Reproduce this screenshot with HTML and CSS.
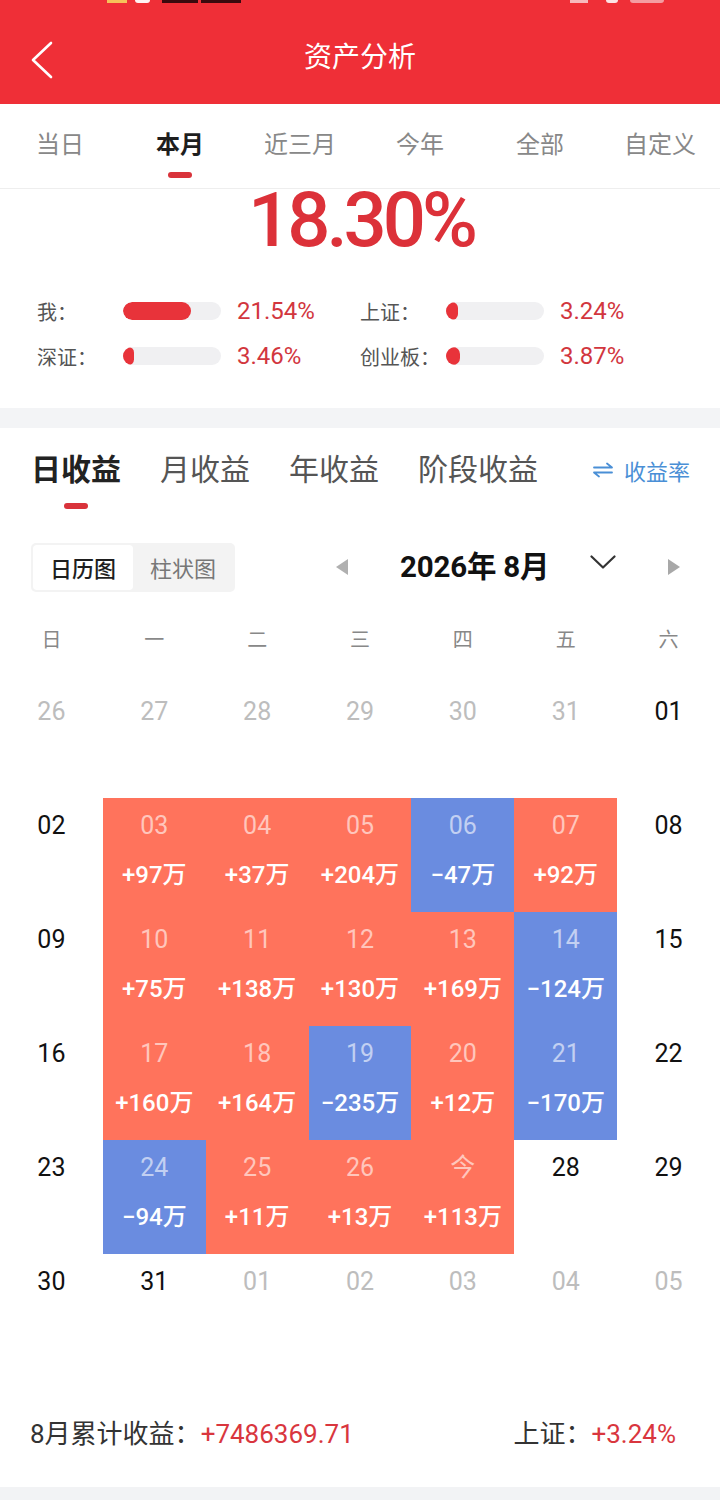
FILE: index.html
```html
<!DOCTYPE html>
<html lang="zh-CN">
<head>
<meta charset="utf-8">
<title>资产分析</title>
<link rel="stylesheet" href="styles.css">
</head>
<body>
<header class="header">
  <div class="status">
    <span class="st st-a"></span><span class="st st-b"></span><span class="st st-c"></span><span class="st st-d"></span>
    <span class="st-sp"></span>
    <span class="st st-e"></span><span class="st st-f"></span><span class="st st-g"></span>
  </div>
  <div class="titlebar">
    <div class="back">
      <svg width="26" height="40" viewBox="0 0 26 40"><polyline points="21,3 3,20 21,37" fill="none" stroke="#fff" stroke-width="2.6" stroke-linecap="round" stroke-linejoin="round"/></svg>
    </div>
    <div class="title">资产分析</div>
    <div></div>
  </div>
</header>

<nav class="tabs">
  <div class="tab">当日</div>
  <div class="tab on">本月</div>
  <div class="tab">近三月</div>
  <div class="tab">今年</div>
  <div class="tab">全部</div>
  <div class="tab">自定义</div>
</nav>

<section class="summary">
  <div class="big">18.30%</div>
  <div class="stats">
    <div class="stat"><span class="lb">我：</span><span class="bar"><i style="width:68px"></i></span><span class="val">21.54%</span></div>
    <div class="stat"><span class="lb">上证：</span><span class="bar"><i style="width:12px"></i></span><span class="val">3.24%</span></div>
    <div class="stat"><span class="lb">深证：</span><span class="bar"><i style="width:11px"></i></span><span class="val">3.46%</span></div>
    <div class="stat"><span class="lb">创业板：</span><span class="bar"><i style="width:14px"></i></span><span class="val">3.87%</span></div>
  </div>
</section>

<div class="sep"></div>

<section class="panel">
  <div class="etabs">
    <div class="etab on">日收益</div>
    <div class="etab">月收益</div>
    <div class="etab">年收益</div>
    <div class="etab">阶段收益</div>
    <div class="rate">
      <svg width="20" height="16" viewBox="0 0 20 16"><path d="M1 5.5H19L14 1.5M19 10.5H1L6 14.5" fill="none" stroke="#4A8FD6" stroke-width="1.8" stroke-linecap="round" stroke-linejoin="round"/></svg>
      <span>收益率</span>
    </div>
  </div>

  <div class="ctrl">
    <div class="toggle"><span class="on">日历图</span><span>柱状图</span></div>
    <svg class="prev" width="12" height="16" viewBox="0 0 12 16"><polygon points="12,0 0,8 12,16" fill="#B0B0B0"/></svg>
    <div class="month">2026年 8月</div>
    <svg class="chev" width="26" height="14" viewBox="0 0 26 14"><polyline points="1.5,1.5 13,12.5 24.5,1.5" fill="none" stroke="#333" stroke-width="2.2" stroke-linecap="round" stroke-linejoin="round"/></svg>
    <svg class="next" width="12" height="16" viewBox="0 0 12 16"><polygon points="0,0 12,8 0,16" fill="#A8A8A8"/></svg>
  </div>

  <div class="wk">
    <span>日</span><span>一</span><span>二</span><span>三</span><span>四</span><span>五</span><span>六</span>
  </div>

  <div class="cal">
    <div class="d mute"><b>26</b></div>
    <div class="d mute"><b>27</b></div>
    <div class="d mute"><b>28</b></div>
    <div class="d mute"><b>29</b></div>
    <div class="d mute"><b>30</b></div>
    <div class="d mute"><b>31</b></div>
    <div class="d"><b>01</b></div>

    <div class="d"><b>02</b></div>
    <div class="d up"><b>03</b><em>+97万</em></div>
    <div class="d up"><b>04</b><em>+37万</em></div>
    <div class="d up"><b>05</b><em>+204万</em></div>
    <div class="d dn"><b>06</b><em>−47万</em></div>
    <div class="d up"><b>07</b><em>+92万</em></div>
    <div class="d"><b>08</b></div>

    <div class="d"><b>09</b></div>
    <div class="d up"><b>10</b><em>+75万</em></div>
    <div class="d up"><b>11</b><em>+138万</em></div>
    <div class="d up"><b>12</b><em>+130万</em></div>
    <div class="d up"><b>13</b><em>+169万</em></div>
    <div class="d dn"><b>14</b><em>−124万</em></div>
    <div class="d"><b>15</b></div>

    <div class="d"><b>16</b></div>
    <div class="d up"><b>17</b><em>+160万</em></div>
    <div class="d up"><b>18</b><em>+164万</em></div>
    <div class="d dn"><b>19</b><em>−235万</em></div>
    <div class="d up"><b>20</b><em>+12万</em></div>
    <div class="d dn"><b>21</b><em>−170万</em></div>
    <div class="d"><b>22</b></div>

    <div class="d"><b>23</b></div>
    <div class="d dn"><b>24</b><em>−94万</em></div>
    <div class="d up"><b>25</b><em>+11万</em></div>
    <div class="d up"><b>26</b><em>+13万</em></div>
    <div class="d up"><b>今</b><em>+113万</em></div>
    <div class="d"><b>28</b></div>
    <div class="d"><b>29</b></div>

    <div class="d"><b>30</b></div>
    <div class="d"><b>31</b></div>
    <div class="d mute"><b>01</b></div>
    <div class="d mute"><b>02</b></div>
    <div class="d mute"><b>03</b></div>
    <div class="d mute"><b>04</b></div>
    <div class="d mute"><b>05</b></div>
  </div>

  <div class="foot">
    <div class="fi"><span class="fl">8月累计收益：</span><span class="fv">+7486369.71</span></div>
    <div class="fi"><span class="fl">上证：</span><span class="fv">+3.24%</span></div>
  </div>
</section>
<div class="bottom"></div>
</body>
</html>
```

FILE: styles.css
```css
* { box-sizing: border-box; margin: 0; padding: 0; }
body {
  margin: 0;
  width: 720px;
  background: #fff;
  color: #111;
  font-family: Roboto, "Noto Sans CJK SC", sans-serif;
}

/* header */
.header { height: 104px; background: #EF2F37; display: flex; flex-direction: column; }
.status { height: 4px; display: flex; align-items: flex-start; }
.st { display: block; height: 3px; }
.st-a { width: 20px; margin-left: 107px; background: #F6C25A; }
.st-b { width: 15px; margin-left: 8px; background: #FFF3F3; border-radius: 0 0 4px 4px; }
.st-c { width: 36px; margin-left: 12px; background: #3A0A0E; }
.st-d { width: 40px; margin-left: 3px; background: #3A0A0E; }
.st-sp { flex: 1; }
.st-e { width: 18px; background: #F7B9BC; }
.st-f { width: 12px; margin-left: 18px; background: #FCE3E4; border-radius: 0 0 4px 4px; }
.st-g { width: 34px; margin-left: 12px; margin-right: 56px; background: #F49DA1; border-radius: 0 0 4px 4px; }
.titlebar { flex: 1; display: grid; grid-template-columns: 120px 1fr 120px; align-items: center; padding-top: 8px; }
.back { padding-left: 30px; display: flex; padding-top: 4px; }
.title { text-align: center; color: #fff; font-size: 28px; line-height: 36px; }

/* period tabs */
.tabs { display: grid; grid-template-columns: repeat(6, 1fr); height: 85px; border-bottom: 1px solid #EEEEEE; }
.tab { display: flex; flex-direction: column; align-items: center; padding-top: 28px; font-size: 24px; line-height: 26px; color: #888; }
.tab.on { color: #1E1E1E; font-weight: 700; }
.tab.on::after { content: ""; width: 24px; height: 6px; border-radius: 3px; background: #D9333B; margin-top: 14px; }

/* summary */
.summary { height: 219px; }
.big { text-align: center; font-size: 76px; line-height: 62px; font-weight: 500; color: #DC3139; letter-spacing: -4px; padding-left: 2px; }
.stats { display: grid; grid-template-columns: 323px 323px; row-gap: 9px; padding-left: 37px; margin-top: 42px; }
.stat { display: flex; align-items: center; height: 36px; }
.lb { width: 86px; font-size: 20px; color: #555; }
.bar { width: 98px; height: 18px; border-radius: 9px; background: #F0F0F2; margin-right: 16px; overflow: hidden; }
.bar i { display: block; height: 100%; border-radius: 9px; background: #E8333A; }
.val { font-size: 24px; color: #D2363E; }

.sep { height: 20px; background: #F3F4F6; }

/* earnings tabs */
.etabs { height: 92px; display: flex; align-items: flex-start; padding: 24px 30px 0 31px; gap: 39px; }
.etab { display: flex; flex-direction: column; align-items: center; font-size: 30px; line-height: 36px; color: #555; }
.etab.on { color: #222; font-weight: 700; }
.etab.on::after { content: ""; width: 24px; height: 6px; border-radius: 3px; background: #D9333B; margin-top: 15px; }
.rate { margin-left: auto; display: flex; align-items: center; gap: 11px; height: 36px; color: #4A8FD6; font-size: 22px; }

/* controls */
.ctrl { height: 84px; padding: 10px 0 0 31px; display: flex; align-items: center; }
.toggle { display: flex; width: 204px; height: 49px; padding: 2px; background: #F3F3F3; border-radius: 5px; }
.toggle span { width: 100px; display: flex; align-items: center; justify-content: center; font-size: 22px; color: #777; }
.toggle .on { background: #fff; color: #1E1E1E; font-weight: 500; border-radius: 4px; }
.prev { margin-left: 101px; flex: none; }
.month { flex: none; width: 152px; margin-left: 52px; font-size: 29.5px; font-weight: 700; color: #111; white-space: nowrap; line-height: 36px; letter-spacing: -0.2px; }
.chev { flex: none; margin-left: 38px; margin-top: -10px; }
.next { flex: none; margin-left: 52px; }

/* weekdays */
.wk { display: grid; grid-template-columns: repeat(7, 1fr); height: 72px; line-height: 72px; margin-bottom: 8px; text-align: center; font-size: 20px; color: #888; }

/* calendar */
.cal { display: grid; grid-template-columns: repeat(7, 1fr); grid-auto-rows: 114px; }
.d { display: flex; flex-direction: column; align-items: center; padding-top: 13px; }
.d b { font-weight: 400; font-size: 25px; line-height: 30px; color: #111; }
.d em { font-style: normal; font-weight: 500; font-size: 24px; line-height: 30px; color: #fff; margin-top: 19px; }
.d.mute b { color: #BDBDBD; }
.d.up { background: #FF735C; }
.d.dn { background: #6A8CE0; }
.d.up b, .d.dn b { color: rgba(255, 255, 255, 0.6); }

/* footer */
.foot { height: 119px; display: flex; justify-content: space-between; align-items: flex-start; padding: 50px 44px 0 30px; }
.fi { display: flex; align-items: center; line-height: 32px; }
.fl { font-size: 26px; color: #333; }
.fv { font-size: 26px; color: #D9363E; }

.bottom { height: 20px; background: #F2F3F5; }
```
